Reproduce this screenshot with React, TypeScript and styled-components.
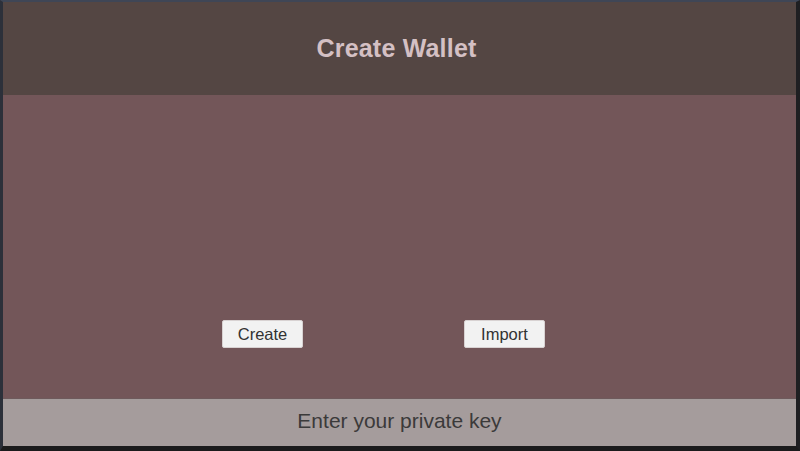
import styled, { createGlobalStyle } from "styled-components";

const Global = createGlobalStyle`
  html, body {
    margin: 0;
    padding: 0;
    background: #1b1b1c;
    font-family: "Liberation Sans", Arial, sans-serif;
  }
`;

const Frame = styled.div`
  width: 800px;
  height: 451px;
  box-sizing: border-box;
  border-top: 2px solid #3f4656;
  border-left: 3px solid #2c303a;
  border-right: 4px solid #1f1f22;
  border-bottom: 5px solid #1b1b1c;
  display: flex;
  flex-direction: column;
`;

const Header = styled.div`
  height: 93px;
  background: #544643;
  display: flex;
  align-items: center;
  justify-content: center;
`;

const Title = styled.h1`
  margin: 0;
  font-size: 25px;
  font-weight: bold;
  color: #d4c0c4;
  letter-spacing: 0.2px;
  transform: translateX(-3px);
`;

const Main = styled.div`
  flex: 1;
  background: #735659;
  display: flex;
  align-items: flex-end;
  padding: 0 0 50px 219px;
  gap: 161px;
`;

const Button = styled.button`
  width: 81px;
  height: 28px;
  background: #f2f2f2;
  border: 1px solid #d8d2d2;
  border-radius: 2px;
  font-family: "Liberation Sans", Arial, sans-serif;
  font-size: 16.5px;
  color: #333333;
  padding: 0;
  cursor: pointer;
`;

const Footer = styled.div`
  height: 48px;
  background: #a59c9c;
  border-top: 1px solid #6e5a5c;
  box-sizing: border-box;
  display: flex;
  align-items: center;
  justify-content: center;
  padding-bottom: 3px;
`;

const Prompt = styled.span`
  font-size: 21px;
  color: #3b3a3a;
`;

export default function App() {
  return (
    <>
      <Global />
      <Frame>
        <Header>
          <Title>Create Wallet</Title>
        </Header>
        <Main>
          <Button>Create</Button>
          <Button>Import</Button>
        </Main>
        <Footer>
          <Prompt>Enter your private key</Prompt>
        </Footer>
      </Frame>
    </>
  );
}
